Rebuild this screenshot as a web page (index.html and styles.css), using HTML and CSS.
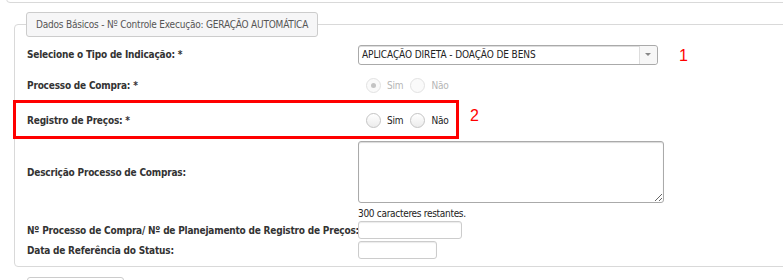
FILE: index.html
```html
<!DOCTYPE html>
<html lang="pt-BR">
<head>
    <meta charset="UTF-8">
    <title>Dados Básicos</title>
    <link rel="stylesheet" href="styles.css">
</head>
<body>
    <div class="page">
        <div class="top-panel"></div>

        <fieldset class="basic-data">
            <legend>Dados Básicos - Nº Controle Execução: GERAÇÃO AUTOMÁTICA</legend>

            <div class="form-row row-type">
                <label class="field-label">Selecione o Tipo de Indicação: *</label>
                <div class="select-box">
                    <span class="select-text">APLICAÇÃO DIRETA - DOAÇÃO DE BENS</span>
                    <span class="select-arrow"></span>
                </div>
                <span class="note note-1">1</span>
            </div>

            <div class="form-row row-purchase">
                <label class="field-label">Processo de Compra: *</label>
                <div class="radio-group disabled">
                    <span class="radio checked"></span><span class="radio-label">Sim</span>
                    <span class="radio"></span><span class="radio-label">Não</span>
                </div>
            </div>

            <div class="form-row row-prices">
                <label class="field-label">Registro de Preços: *</label>
                <div class="radio-group">
                    <span class="radio"></span><span class="radio-label">Sim</span>
                    <span class="radio"></span><span class="radio-label">Não</span>
                </div>
                <span class="highlight"></span>
                <span class="note note-2">2</span>
            </div>

            <div class="form-row row-description">
                <label class="field-label">Descrição Processo de Compras:</label>
                <textarea class="text-area"></textarea>
            </div>

            <div class="form-row row-counter">
                <span></span>
                <span class="counter">300 caracteres restantes.</span>
            </div>

            <div class="form-row row-number">
                <label class="field-label">Nº Processo de Compra/ Nº de Planejamento de Registro de Preços:</label>
                <input class="text-input input-number" type="text">
            </div>

            <div class="form-row row-date">
                <label class="field-label">Data de Referência do Status:</label>
                <input class="text-input input-date" type="text">
            </div>
        </fieldset>

        <div class="actions">
            <div class="action-button"></div>
        </div>
    </div>
</body>
</html>
```

FILE: styles.css
```css
html, body {
    overflow: hidden;
}
body {
    margin: 0;
    font-family: Tahoma, "DejaVu Sans Condensed", "DejaVu Sans", sans-serif;
    font-size: 10px;
    letter-spacing: -0.2px;
    color: #333;
    background-color: #fff;
}
.page {
    width: 820px;
}
.top-panel {
    margin: -20px 0 0 6px;
    height: 21px;
    border: 1px solid #d9d9d9;
    border-radius: 4px;
}
.basic-data {
    margin: 9px 0 0 14px;
    padding: 0 0 7px 11px;
    border: 1px solid #d9d9d9;
    border-radius: 4px;
}
.basic-data legend {
    padding: 5px 9px;
    border: 1px solid #ccc;
    border-radius: 3px;
    background-color: #f6f6f7;
    color: #555;
    line-height: 13px;
}
.form-row {
    position: relative;
    display: grid;
    grid-template-columns: 331px 1fr;
    align-items: center;
    padding-left: 1px;
}
.field-label {
    font-weight: bold;
    letter-spacing: -0.2px;
    white-space: nowrap;
}
.row-type {
    margin-top: 1px;
    height: 33px;
}
.row-purchase {
    height: 29px;
}
.row-prices {
    height: 39px;
}
.row-prices .field-label,
.row-prices .radio-group {
    margin-top: 2px;
}
.row-description {
    margin-top: 2px;
}
.row-counter {
    padding-top: 4px;
    line-height: 13px;
}
.row-number {
    margin-top: 1px;
}
.row-date {
    margin-top: 2px;
}

/* select */
.select-box {
    display: flex;
    width: 300px;
    height: 20px;
    box-sizing: border-box;
    border: 1px solid #aaa;
    border-radius: 3px;
    background-color: #fff;
    box-shadow: inset 0 1px 0 #ddd;
    color: #222;
}
.select-text {
    flex: 1;
    padding-left: 3px;
    line-height: 18px;
    letter-spacing: -0.1px;
    white-space: nowrap;
    overflow: hidden;
}
.select-arrow {
    position: relative;
    width: 17px;
    border-left: 1px solid #ddd;
    border-radius: 0 3px 3px 0;
    background-color: #f7f7f7;
}
.select-arrow::after {
    content: "";
    position: absolute;
    left: 5px;
    top: 7px;
    border-left: 3px solid transparent;
    border-right: 3px solid transparent;
    border-top: 3px solid #888;
}

/* radios */
.radio-group {
    display: flex;
    align-items: center;
    padding-left: 8px;
}
.radio {
    width: 15px;
    height: 15px;
    box-sizing: border-box;
    border: 1px solid #c4c4c4;
    border-radius: 50%;
    background: linear-gradient(#fff, #ececec);
    position: relative;
}
.radio-label {
    margin: 0 7px 0 6px;
    color: #222;
}
.disabled .radio {
    border-color: #e2e2e2;
    background: #fafafa;
}
.disabled .radio-label {
    color: #b5b5b5;
}
.radio.checked::after {
    content: "";
    position: absolute;
    left: 4px;
    top: 4px;
    width: 5px;
    height: 5px;
    border-radius: 50%;
    background-color: #c4c4c4;
}

/* fields */
.text-area {
    display: block;
    width: 306px;
    height: 62px;
    margin: 0;
    box-sizing: border-box;
    border: 1px solid #aaa;
    border-radius: 3px;
    box-shadow: inset 0 1px 1px rgba(0,0,0,0.15);
}
.counter {
    color: #222;
    letter-spacing: -0.3px;
}
.text-input {
    display: block;
    height: 18px;
    margin: 0;
    padding: 0;
    box-sizing: border-box;
    border: 1px solid #ccc;
    border-radius: 3px;
    box-shadow: inset 0 1px 1px rgba(0,0,0,0.08);
}
.input-number {
    width: 104px;
}
.input-date {
    width: 79px;
}

/* annotations */
.highlight {
    position: absolute;
    left: -13px;
    top: 0;
    width: 446px;
    height: 39px;
    box-sizing: border-box;
    border: 3px solid #f00;
}
.note {
    position: absolute;
    font-family: "Liberation Sans", Arial, sans-serif;
    font-size: 16px;
    line-height: 16px;
    letter-spacing: 0;
    color: #f00;
}
.note-1 {
    left: 653px;
    top: 10px;
}
.note-2 {
    left: 444px;
    top: 8px;
}

.actions {
    padding: 10px 0 0 27px;
}
.action-button {
    width: 95px;
    height: 20px;
    border: 1px solid #ccc;
    border-radius: 3px;
}
```
